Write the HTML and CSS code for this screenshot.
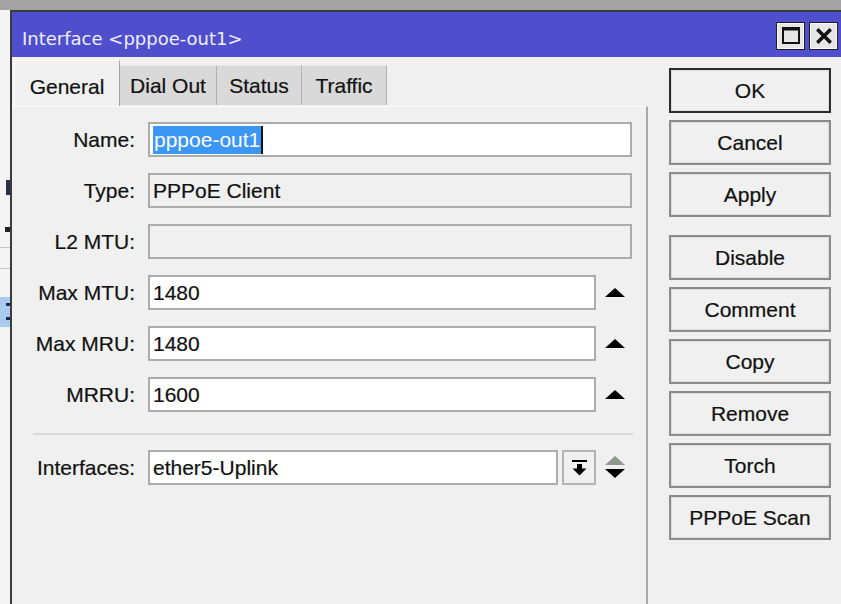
FILE: index.html
```html
<!DOCTYPE html>
<html lang="en">
<head>
<meta charset="utf-8">
<title>Interface &lt;pppoe-out1&gt;</title>
<link rel="stylesheet" href="styles.css">
</head>
<body>
<div class="topband"></div>
<div class="desk">
  <!-- sliver of the window lying behind the dialog -->
  <div class="backwin">
    <span class="frag frag-t"></span>
    <span class="frag frag-dot"></span>
    <span class="frag frag-rule r1"></span>
    <span class="frag frag-rule r2"></span>
    <span class="frag frag-sel"><span class="frag-mark m1"></span><span class="frag-mark m2"></span></span>
  </div>

  <div class="window">
    <div class="titlebar">
      <span class="title">Interface &lt;pppoe-out1&gt;</span>
      <div class="tb-btns">
        <span class="tb-btn">
          <svg width="18" height="17" viewBox="0 0 18 17"><rect x="1" y="1.5" width="16" height="14.5" fill="none" stroke="#111" stroke-width="2"/><rect x="0" y="0" width="18" height="3.5" fill="#111"/></svg>
        </span>
        <span class="tb-btn">
          <svg width="16" height="16" viewBox="0 0 16 16"><path d="M2.5 2.5 L13.5 13.5 M13.5 2.5 L2.5 13.5" stroke="#111" stroke-width="3.6" stroke-linecap="square"/></svg>
        </span>
      </div>
    </div>

    <div class="body">
      <div class="left">
        <div class="tabs">
          <span class="tab active">General</span>
          <span class="tab w-dial">Dial Out</span>
          <span class="tab w-status">Status</span>
          <span class="tab w-traffic">Traffic</span>
        </div>

        <div class="panel">
          <div class="row">
            <span class="lbl">Name:</span>
            <div class="field"><span class="sel">pppoe-out1</span><span class="caret"></span></div>
          </div>
          <div class="row">
            <span class="lbl">Type:</span>
            <div class="field ro">PPPoE Client</div>
          </div>
          <div class="row">
            <span class="lbl">L2 MTU:</span>
            <div class="field ro"></div>
          </div>
          <div class="row">
            <span class="lbl">Max MTU:</span>
            <div class="field">1480</div>
            <span class="spin"><svg width="20" height="9" viewBox="0 0 20 9"><polygon points="0,9 20,9 10,0" fill="#000"/></svg></span>
          </div>
          <div class="row">
            <span class="lbl">Max MRU:</span>
            <div class="field">1480</div>
            <span class="spin"><svg width="20" height="9" viewBox="0 0 20 9"><polygon points="0,9 20,9 10,0" fill="#000"/></svg></span>
          </div>
          <div class="row">
            <span class="lbl">MRRU:</span>
            <div class="field">1600</div>
            <span class="spin"><svg width="20" height="9" viewBox="0 0 20 9"><polygon points="0,9 20,9 10,0" fill="#000"/></svg></span>
          </div>

          <div class="sep"></div>

          <div class="row">
            <span class="lbl">Interfaces:</span>
            <div class="field">ether5-Uplink</div>
            <span class="dd">
              <svg width="15" height="16" viewBox="0 0 15 16"><rect x="0" y="0" width="15" height="2" fill="#000"/><rect x="5" y="4" width="5" height="5" fill="#000"/><polygon points="0.5,8.5 14.5,8.5 7.5,15.5" fill="#000"/></svg>
            </span>
            <span class="spin"><svg width="20" height="24" viewBox="0 0 20 24"><polygon points="0,9 20,9 10,0" fill="#8e988e"/><polygon points="0,13 20,13 10,22" fill="#000"/></svg></span>
          </div>
        </div>
      </div>

      <div class="right">
        <span class="btn default">OK</span>
        <span class="btn">Cancel</span>
        <span class="btn">Apply</span>
        <span class="btn group">Disable</span>
        <span class="btn">Comment</span>
        <span class="btn">Copy</span>
        <span class="btn">Remove</span>
        <span class="btn">Torch</span>
        <span class="btn">PPPoE Scan</span>
      </div>
    </div>
  </div>
</div>
</body>
</html>
```

FILE: styles.css
```css
* { box-sizing: border-box; }

html, body { margin: 0; padding: 0; }

body {
  width: 841px;
  height: 604px;
  overflow: hidden;
  background: #a3a3a3;
  font-family: "Liberation Sans", Arial, sans-serif;
  font-size: 21px;
  color: #111111;
  -webkit-text-stroke: 0.2px #111111;
}

.topband { height: 10px; background: #a3a3a3; }

.desk { display: flex; height: 594px; }

/* window behind the dialog, only a thin slice shows */
.backwin {
  width: 10px;
  flex: none;
  background: #f4f4f4;
  position: relative;
}
.frag { position: absolute; display: block; }
.frag-t { left: 6px; top: 170px; width: 4px; height: 15px; background: #2d2d4e; }
.frag-dot { left: 5px; top: 217px; width: 5px; height: 5px; background: #222; }
.frag-rule { left: 0; width: 10px; height: 1px; background: #c6c6c6; }
.frag-rule.r1 { top: 237px; }
.frag-rule.r2 { top: 258px; }
.frag-sel { left: 0; top: 287px; width: 10px; height: 30px; background: #a9cbef; }
.frag-mark { position: absolute; display: block; left: 6px; width: 4px; height: 3px; background: #1d2a4a; }
.frag-mark.m1 { top: 6px; }
.frag-mark.m2 { top: 20px; }

.window {
  flex: 1;
  min-width: 0;
  display: flex;
  flex-direction: column;
  background: #f0f0f0;
  border-left: 2px solid #3b3b3b;
  border-top: 2px solid #3b3b3b;
}

/* caption bar */
.titlebar {
  height: 45px;
  flex: none;
  display: flex;
  align-items: center;
  justify-content: space-between;
  padding: 2px 3px 0 10px;
  background: #4f4fcd;
}
.title {
  font-family: "DejaVu Sans", Verdana, sans-serif;
  font-size: 18px;
  color: #eeeeff;
  -webkit-text-stroke: 0;
  white-space: nowrap;
  padding-top: 6px;
}
.tb-btns { display: flex; gap: 4px; }
.tb-btn {
  width: 29px;
  height: 28px;
  display: flex;
  align-items: center;
  justify-content: center;
  background: #e6e6e6;
  border: 1px solid #1e1e1e;
  box-shadow: inset 0 0 0 1px #f8f8f8;
}

.body { flex: 1; display: flex; }

.left { width: 636px; flex: none; display: flex; flex-direction: column; }

/* tab strip */
.tabs {
  height: 49px;
  flex: none;
  display: flex;
  align-items: flex-start;
  padding: 3px 0 0 2px;
}
.tab {
  height: 40px;
  margin-top: 5px;
  line-height: 39px;
  text-align: center;
  white-space: nowrap;
  background: #d9d9d9;
  border-top: 1px solid #e9e9e9;
  border-right: 1px solid #b2b2b2;
}
.tab.active {
  width: 106px;
  height: 46px;
  margin-top: 0;
  padding-top: 6px;
  line-height: 40px;
  background: #f0f0f0;
  border-top: 1px solid #ffffff;
  border-left: 1px solid #ffffff;
  border-right: 1px solid #a3a3a3;
}
.tab.w-dial { width: 97px; }
.tab.w-status { width: 85px; }
.tab.w-traffic { width: 85px; }

/* form page */
.panel {
  flex: 1;
  padding: 15px 14px 0 0;
  border-top: 1px solid #fcfcfc;
  border-right: 2px solid #a9a9a9;
}
.row {
  display: flex;
  align-items: center;
  height: 35px;
  margin-bottom: 16px;
}
.lbl {
  width: 123px;
  flex: none;
  margin-right: 13px;
  text-align: right;
  white-space: nowrap;
}
.field {
  flex: 1;
  height: 35px;
  display: flex;
  align-items: center;
  padding-left: 3px;
  background: #ffffff;
  border: 2px solid #acacac;
  white-space: nowrap;
  overflow: hidden;
}
.field.ro { background: #f0f0f0; }

.sel {
  display: inline-block;
  height: 28px;
  line-height: 28px;
  padding: 0 1px;
  background: #3c96f4;
  color: #ffffff;
  -webkit-text-stroke: 0;
}
.caret { display: inline-block; width: 2px; height: 28px; background: #111; }

.spin {
  width: 36px;
  flex: none;
  display: flex;
  align-items: center;
  justify-content: center;
  padding-left: 2px;
}
.dd {
  width: 34px;
  height: 35px;
  flex: none;
  margin-left: 4px;
  display: flex;
  align-items: center;
  justify-content: center;
  background: #f0f0f0;
  border: 2px solid #b4b4b4;
}

.sep {
  height: 2px;
  margin: 21px -1px 15px 21px;
  background: #d9d9d9;
}

/* command buttons */
.right {
  flex: 1;
  display: flex;
  flex-direction: column;
  align-items: flex-start;
  padding: 11px 0 0 21px;
}
.btn {
  width: 162px;
  height: 45px;
  margin-bottom: 7px;
  line-height: 41px;
  text-align: center;
  white-space: nowrap;
  background: #f0f0f0;
  border: 2px solid #8c8c8c;
  box-shadow: inset 0 0 0 1px #dedede;
}
.btn.default { border-color: #2c2c2c; }
.btn.group { margin-top: 11px; }
```
